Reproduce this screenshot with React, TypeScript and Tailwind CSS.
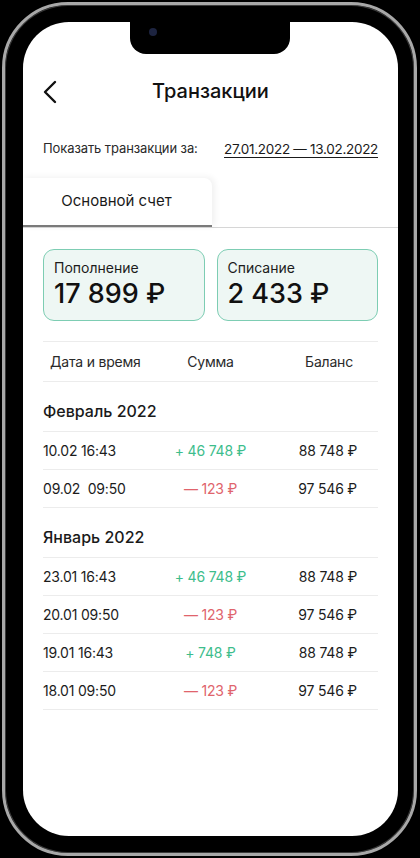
import React from "react";

type Tx = { date: string; amount: string; kind: "in" | "out"; balance: string };

const february: Tx[] = [
  { date: "10.02 16:43", amount: "+ 46 748 ₽", kind: "in", balance: "88 748 ₽" },
  { date: "09.02  09:50", amount: "— 123 ₽", kind: "out", balance: "97 546 ₽" },
];

const january: Tx[] = [
  { date: "23.01 16:43", amount: "+ 46 748 ₽", kind: "in", balance: "88 748 ₽" },
  { date: "20.01 09:50", amount: "— 123 ₽", kind: "out", balance: "97 546 ₽" },
  { date: "19.01 16:43", amount: "+ 748 ₽", kind: "in", balance: "88 748 ₽" },
  { date: "18.01 09:50", amount: "— 123 ₽", kind: "out", balance: "97 546 ₽" },
];

const Row = ({ tx }: { tx: Tx }) => (
  <div className="grid h-[38px] grid-cols-[1fr_110px_1fr] items-center border-b border-[#ececec] text-[14px] tracking-[-0.2px] text-[#1c1c1c]">
    <span className="whitespace-pre">{tx.date}</span>
    <span
      className={`text-center ${tx.kind === "in" ? "text-[#3dbd8c]" : "text-[#e0646c]"}`}
    >
      {tx.amount}
    </span>
    <span className="pr-[21px] text-right">{tx.balance}</span>
  </div>
);

const Month = ({ title, items }: { title: string; items: Tx[] }) => (
  <div>
    <div className="flex h-[50px] items-end border-b border-[#ececec] pb-[8px] text-[16px] font-medium text-[#1a1a1a]">
      {title}
    </div>
    {items.map((tx, i) => (
      <Row key={i} tx={tx} />
    ))}
  </div>
);

const SumCard = ({ label, value }: { label: string; value: string }) => (
  <div className="flex h-[72px] flex-1 flex-col rounded-[11px] border border-[#7dcdb3] bg-[#eef7f4] px-[10px] pt-[9px]">
    <span className="text-[14px] leading-[18px] text-[#1c1c1c]">{label}</span>
    <span className="text-[27px] font-medium leading-[34px] text-[#111]">{value}</span>
  </div>
);

export default function App() {
  return (
    <div
      className="h-[858px] w-[420px] bg-black pl-[2px] pt-[2px]"
      style={{ fontFamily: "Inter, 'Noto Sans', sans-serif" }}
    >
      <div className="h-[854px] w-[415px] rounded-[66px] border-[3px] border-[#a8a8a8] bg-black pb-[17px] pl-[18px] pr-[16px] pt-[17px] shadow-[inset_0_0_0_1px_#3a3a3a]">
        <div className="relative h-full w-full overflow-hidden rounded-[46px] bg-white">
          {/* notch */}
          <div className="absolute left-[107px] top-0 h-[32px] w-[160px] rounded-b-[16px] bg-black">
            <div className="absolute left-[19px] top-[6px] h-[8px] w-[8px] rounded-full bg-[#1d2440]" />
          </div>

          <div className="h-[57px]" />
          <div className="relative flex h-[24px] items-center justify-center px-[20px]">
            <svg
              className="absolute left-[19px] top-[1px]"
              width="16"
              height="24"
              viewBox="0 0 16 24"
              fill="none"
            >
              <path d="M13 2L3 12l10 10" stroke="#111" strokeWidth="2.4" strokeLinecap="round" strokeLinejoin="round" />
            </svg>
            <span className="text-[20px] font-medium text-[#111]">Транзакции</span>
          </div>

          <div className="mt-[36px] flex h-[20px] items-center justify-between whitespace-nowrap px-[20px]">
            <span className="text-[13px] tracking-[-0.1px] text-[#2a2a2a]">Показать транзакции за:</span>
            <span className="text-[13.5px] tracking-[-0.3px] text-[#1a1a1a] underline underline-offset-[3px]">
              27.01.2022 — 13.02.2022
            </span>
          </div>

          <div className="mt-[19px] flex h-[50px] border-b border-[#d6d6d6]">
            <div className="flex w-[189px] items-center justify-center rounded-tr-[8px] border-b-2 border-[#7a7a7a] bg-white pr-[2px] text-[15px] text-[#1a1a1a] shadow-[3px_-1px_6px_rgba(0,0,0,0.06)]">
              Основной счет
            </div>
          </div>

          <div className="px-[20px]">
            <div className="mt-[21px] flex gap-[12px]">
              <SumCard label="Пополнение" value="17 899 ₽" />
              <SumCard label="Списание" value="2 433 ₽" />
            </div>

            <div className="mt-[20px] grid h-[41px] grid-cols-[1fr_110px_1fr] items-center border-y border-[#ececec] text-[14px] tracking-[-0.2px] text-[#2a2a2a]">
              <span className="pl-[7px]">Дата и время</span>
              <span className="text-center">Сумма</span>
              <span className="pr-[25px] text-right">Баланс</span>
            </div>

            <Month title="Февраль 2022" items={february} />
            <Month title="Январь 2022" items={january} />
          </div>
        </div>
      </div>
    </div>
  );
}
